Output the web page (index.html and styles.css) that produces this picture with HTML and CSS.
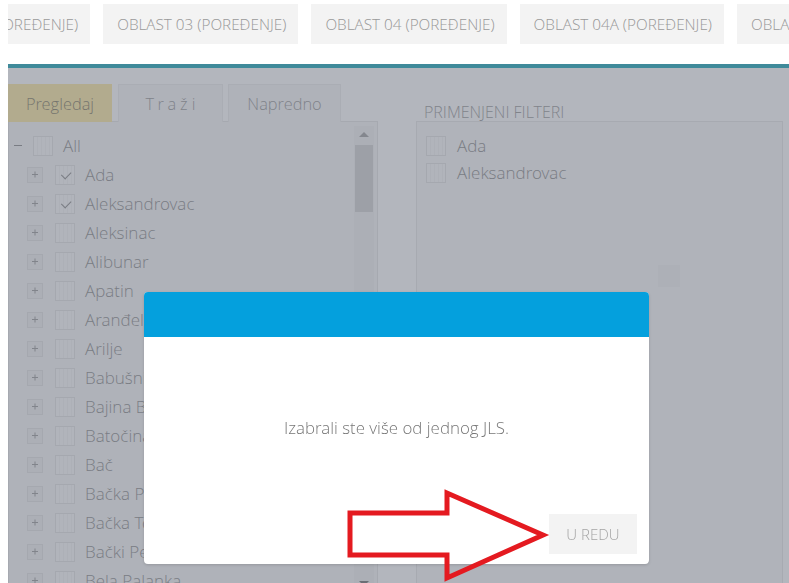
FILE: index.html
```html
<!DOCTYPE html>
<html lang="sr">
<head>
<meta charset="utf-8">
<title>Filteri</title>
<link rel="stylesheet" href="styles.css">
</head>
<body>
<nav class="topbar">
  <div class="strip">
    <span class="area-btn">OBLAST 02 (POREĐENJE)</span>
    <span class="area-btn">OBLAST 03 (POREĐENJE)</span>
    <span class="area-btn">OBLAST 04 (POREĐENJE)</span>
    <span class="area-btn">OBLAST 04A (POREĐENJE)</span>
    <span class="area-btn">OBLAST 05 (POREĐENJE)</span>
  </div>
</nav>

<main class="content">
  <section class="browser">
    <div class="tabs">
      <span class="tab active">Pregledaj</span>
      <span class="tab spaced">Traži</span>
      <span class="tab">Napredno</span>
    </div>
    <div class="tree">
      <ul class="nodes">
        <li class="node root"><span class="exp minus"></span><span class="cb"></span><span class="label">All</span></li>
        <li class="node"><span class="exp"></span><span class="cb checked"></span><span class="label">Ada</span></li>
        <li class="node"><span class="exp"></span><span class="cb checked"></span><span class="label">Aleksandrovac</span></li>
        <li class="node"><span class="exp"></span><span class="cb"></span><span class="label">Aleksinac</span></li>
        <li class="node"><span class="exp"></span><span class="cb"></span><span class="label">Alibunar</span></li>
        <li class="node"><span class="exp"></span><span class="cb"></span><span class="label">Apatin</span></li>
        <li class="node"><span class="exp"></span><span class="cb"></span><span class="label">Aranđelovac</span></li>
        <li class="node"><span class="exp"></span><span class="cb"></span><span class="label">Arilje</span></li>
        <li class="node"><span class="exp"></span><span class="cb"></span><span class="label">Babušnica</span></li>
        <li class="node"><span class="exp"></span><span class="cb"></span><span class="label">Bajina Bašta</span></li>
        <li class="node"><span class="exp"></span><span class="cb"></span><span class="label">Batočina</span></li>
        <li class="node"><span class="exp"></span><span class="cb"></span><span class="label">Bač</span></li>
        <li class="node"><span class="exp"></span><span class="cb"></span><span class="label">Bačka Palanka</span></li>
        <li class="node"><span class="exp"></span><span class="cb"></span><span class="label">Bačka Topola</span></li>
        <li class="node"><span class="exp"></span><span class="cb"></span><span class="label">Bački Petrovac</span></li>
        <li class="node"><span class="exp"></span><span class="cb"></span><span class="label">Bela Palanka</span></li>
      </ul>
      <div class="scroll">
        <span class="arrow up"></span>
        <span class="thumb"></span>
        <span class="track"></span>
        <span class="arrow down"></span>
      </div>
    </div>
  </section>

  <section class="applied">
    <div class="applied-title">PRIMENJENI FILTERI</div>
    <div class="applied-box">
      <div class="chip"><span class="cb"></span><span class="label">Ada</span></div>
      <div class="chip"><span class="cb"></span><span class="label">Aleksandrovac</span></div>
      <span class="loader"></span>
    </div>
  </section>

  <div class="overlay"></div>
</main>

<div class="modal" role="dialog">
  <header class="modal-head"></header>
  <div class="modal-body">
    <p class="message">Izabrali ste više od jednog JLS.</p>
    <div class="modal-foot"><button class="ok">U REDU</button></div>
  </div>
</div>

<svg class="pointer" width="215" height="100" viewBox="0 0 215 100">
  <polygon points="10,28 107,28 107,8 203,50 107,93 107,70 10,70" fill="none" stroke="#e41a20" stroke-width="5" stroke-linejoin="miter"/>
</svg>
</body>
</html>
```

FILE: styles.css
```css
* { box-sizing: border-box; }

html, body {
  margin: 0;
  height: 100%;
  overflow: hidden;
  background: #fff;
  font-family: "Open Sans Light", "Open Sans", "Liberation Sans", sans-serif;
  font-weight: 300;
}

/* area switcher, scrolled horizontally */
.topbar {
  margin: 4px 0 0 8px;
  height: 40px;
  overflow: hidden;
}
.strip {
  display: flex;
  gap: 13px;
  margin-left: -113px;
}
.area-btn {
  flex: none;
  height: 40px;
  line-height: 40px;
  padding: 0 12px 0 14px;
  background: #f3f3f3;
  color: #999;
  font-size: 15.3px;
  white-space: nowrap;
}

/* main panel */
.content {
  position: relative;
  margin: 20px 0 0 8px;
  height: 600px;
  border-top: 4px solid #3f8a9a;
  padding: 16px 6px 0 0;
  display: flex;
  align-items: flex-start;
}

.browser {
  width: 370px;
  flex: none;
}

.tabs {
  display: flex;
  height: 38px;
}
.tab {
  height: 38px;
  line-height: 38px;
  text-align: center;
  font-size: 16.4px;
  color: #999;
  background: #f7f7f7;
  border: 1px solid #ededed;
  border-bottom: none;
  white-space: nowrap;
}
.tab:nth-child(1) { width: 104px; }
.tab:nth-child(2) { width: 105px; margin-left: 6px; }
.tab:nth-child(3) { width: 113px; margin-left: 5px; }
.tab.active {
  background: #fde9a0;
  border-color: #fde9a0;
  color: #857d62;
}
.tab.spaced { letter-spacing: 4px; text-indent: 4px; }

.tree {
  margin-top: -1px;
  height: 470px;
  border: 1px solid #e4e4e4;
  background: #f7f7f7;
  display: flex;
  overflow: hidden;
}

.nodes {
  list-style: none;
  margin: 0;
  padding: 9px 0 0 0;
  flex: 1;
  min-width: 0;
}
.node {
  height: 29px;
  display: flex;
  align-items: center;
  padding-left: 18px;
  white-space: nowrap;
}
.node.root { padding-left: 1px; }
.node.root .cb { margin-left: 7px; }

.exp {
  position: relative;
  width: 16px;
  height: 16px;
  flex: none;
  border: 1px solid #e3e3e3;
  background: #f1f1f1;
}
.exp::before,
.exp::after {
  content: "";
  position: absolute;
  left: 4px;
  top: 6.5px;
  width: 6px;
  height: 1px;
  background: #9a9a9a;
}
.exp::after { transform: rotate(90deg); }
.exp.minus { border-color: transparent; background: transparent; }
.exp.minus::before { left: 3px; width: 8px; background: #8a8a8a; }
.exp.minus::after { display: none; }

.cb {
  position: relative;
  width: 20px;
  height: 20px;
  flex: none;
  margin-left: 12px;
  border: 1px solid #e2e2e2;
  background:
    repeating-linear-gradient(90deg, transparent 0 3px, rgba(0, 0, 0, 0.035) 3px 4px),
    #fbfbfb;
}
.cb.checked::after {
  content: "";
  position: absolute;
  left: 5px;
  top: 3px;
  width: 8px;
  height: 5px;
  border-left: 1.3px solid #8a8a8a;
  border-bottom: 1.3px solid #8a8a8a;
  transform: rotate(-45deg) translate(-1px, 2px);
}

.label {
  margin-left: 10px;
  font-size: 17px;
  color: #8c8c8c;
}

/* vertical scrollbar */
.scroll {
  width: 20px;
  flex: none;
  margin: 4px 3px 0 0;
  display: flex;
  flex-direction: column;
  align-items: center;
  background: #f0f0f0;
}
.arrow {
  width: 0;
  height: 0;
  border-left: 5px solid transparent;
  border-right: 5px solid transparent;
}
.arrow.up { border-bottom: 5px solid #a0a0a0; margin: 6px 0 8px; }
.arrow.down { border-top: 5px solid #707070; margin: 4px 0 4px; }
.thumb {
  width: 18px;
  height: 67px;
  background: #d3d3d3;
}
.track { flex: 1; }

/* applied filters */
.applied {
  flex: 1;
  margin-left: 38px;
}
.applied-title {
  margin-top: 20px;
  height: 16px;
  line-height: 16px;
  padding-left: 8px;
  font-size: 16px;
  color: #999;
  white-space: nowrap;
}
.applied-box {
  position: relative;
  margin-top: 1px;
  height: 470px;
  border: 1px solid #e6e6e6;
  background: #f8f8f8;
  padding: 10px 0 0 9px;
}
.chip {
  height: 27px;
  display: flex;
  align-items: center;
}
.chip .cb { margin-left: 0; }
.chip .label { margin-left: 11px; }
.loader {
  position: absolute;
  left: 241px;
  top: 143px;
  width: 22px;
  height: 22px;
  background: #f2f2f2;
}

/* dimmed backdrop behind the dialog */
.overlay {
  position: absolute;
  inset: 0;
  background: rgba(104, 110, 124, 0.5);
}

/* dialog */
.modal {
  position: fixed;
  left: 144px;
  top: 292px;
  width: 505px;
  height: 272px;
  background: #fff;
  border-radius: 4px;
  overflow: hidden;
  display: flex;
  flex-direction: column;
  box-shadow: 0 1px 3px rgba(0, 0, 0, 0.15);
}
.modal-head {
  height: 45px;
  flex: none;
  background: #04a0dd;
}
.modal-body {
  flex: 1;
  display: flex;
  flex-direction: column;
  padding: 0 12px 10px;
}
.message {
  flex: 1;
  margin: 0;
  display: flex;
  align-items: center;
  justify-content: center;
  padding-top: 3px;
  font-size: 16.9px;
  color: #777;
}
.modal-foot {
  display: flex;
  justify-content: flex-end;
}
.ok {
  width: 88px;
  height: 40px;
  border: none;
  background: #f3f3f3;
  color: #a4a4a4;
  font-family: inherit;
  font-weight: inherit;
  font-size: 15px;
  padding: 0;
}

/* red callout pointing at the confirm button */
.pointer {
  position: fixed;
  left: 340px;
  top: 485px;
}
```
